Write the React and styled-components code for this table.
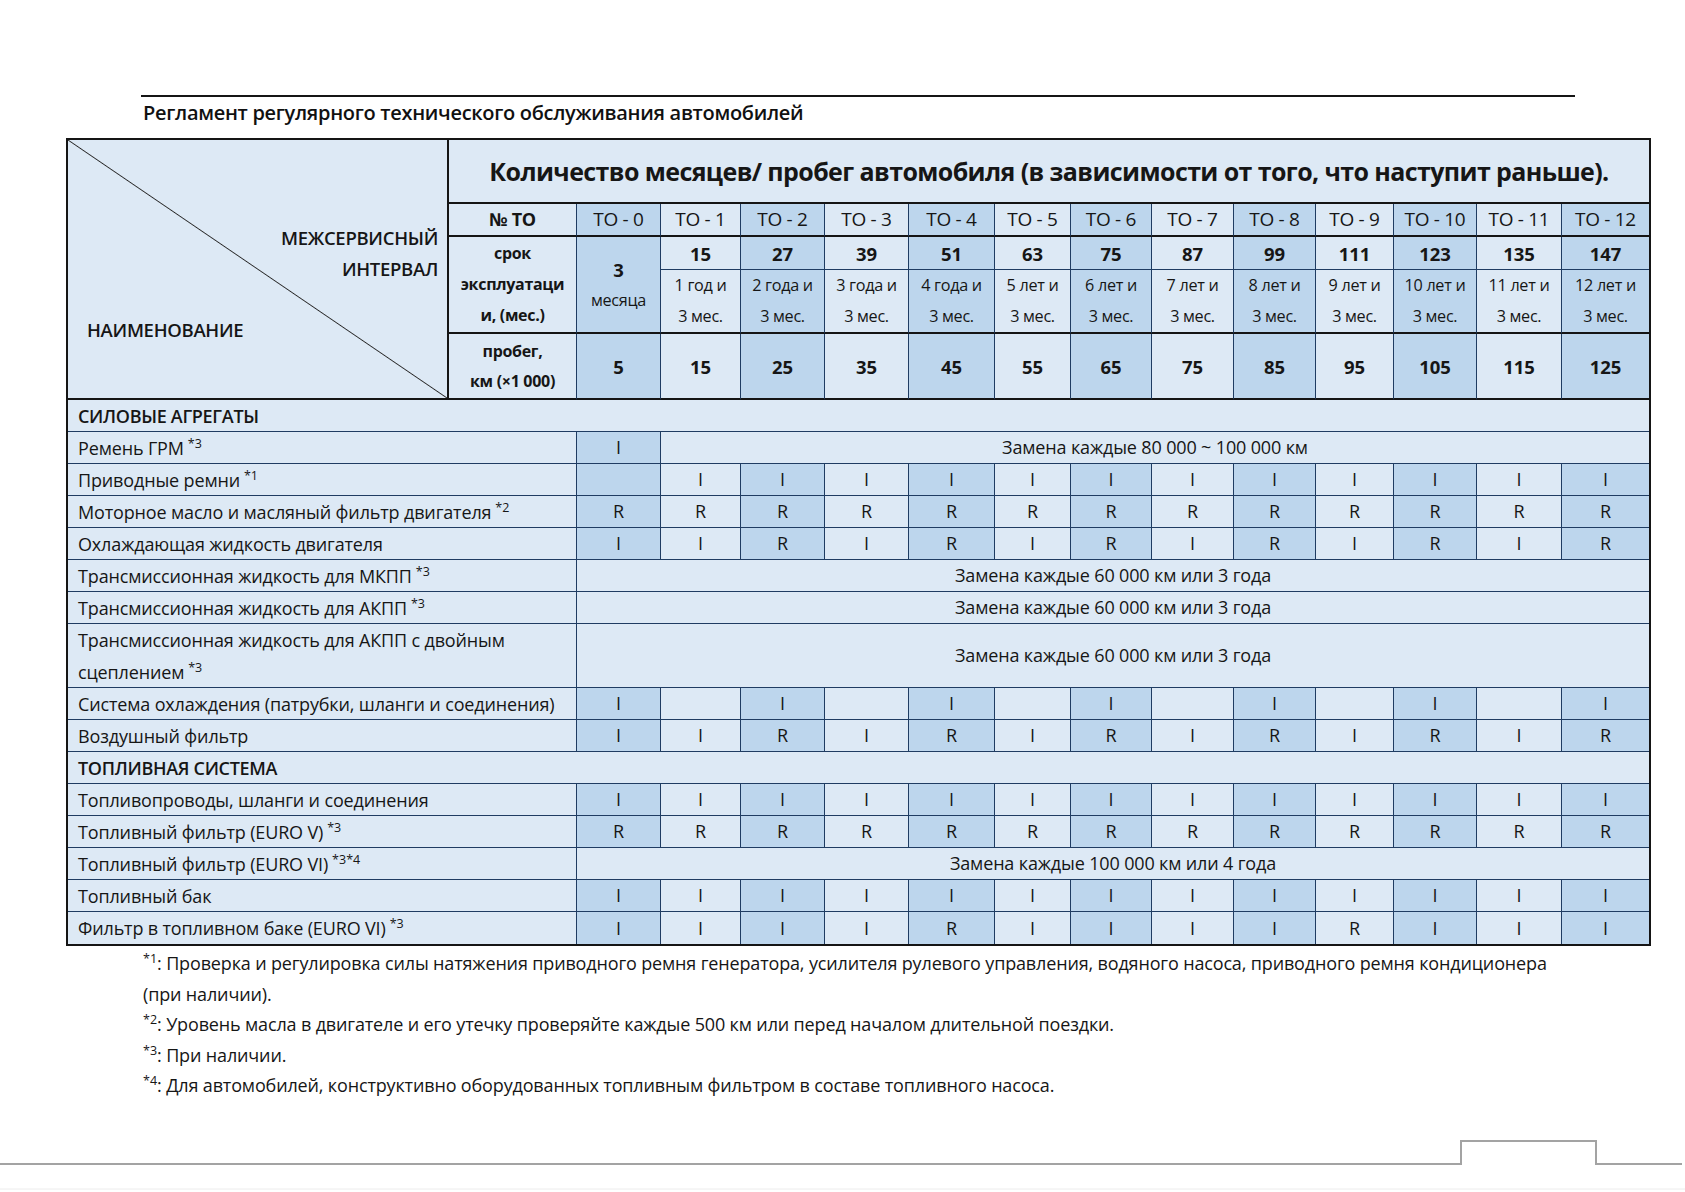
import React from 'react';
import styled, { createGlobalStyle } from 'styled-components';

const INK = '#151515';
const NAVY = '#1f3c62';
const LIGHT = '#dde9f5';
const DARK = '#bdd6ed';

const GlobalStyle = createGlobalStyle`
  html, body { margin: 0; padding: 0; background: #ffffff; }
  body { font-family: "Open Sans", "Noto Sans", sans-serif; color: #161616; }
`;

const Page = styled.div`
  position: relative;
  width: 1685px;
  height: 1192px;
  box-sizing: border-box;
  padding-top: 95px;
  display: flex;
  flex-direction: column;
  overflow: hidden;
`;

const Rule = styled.div`
  margin-left: 141px;
  width: 1434px;
  height: 2px;
  background: ${INK};
`;

const DocTitle = styled.h1`
  margin: 4px 0 0 143px;
  font-size: 20px;
  font-weight: 600;
  line-height: 24px;
  letter-spacing: -0.3px;
  color: #111;
`;

const Table = styled.div`
  margin: 13px 0 0 66px;
  width: 1585px;
  box-sizing: border-box;
  border: 2px solid ${INK};
  display: grid;
  grid-template-columns: 381px 128px 84px 80px 84px 84px 86px 76px 81px 82px 82px 78px 83px 85px 87px;
  grid-template-rows: 64px 33px 33px 64px 66px repeat(7, 32px) 64px repeat(8, 32px);
  background: ${LIGHT};
`;

const edge = (v) =>
  v === 'thick' ? `2px solid ${INK}` : v === 'none' ? 'none' : `1px solid ${NAVY}`;

const Cell = styled.div`
  box-sizing: border-box;
  min-width: 0;
  display: flex;
  flex-direction: column;
  align-items: center;
  justify-content: center;
  text-align: center;
  background: ${(p) => (p.$dark ? DARK : LIGHT)};
  border-right: ${(p) => edge(p.$r)};
  border-bottom: ${(p) => edge(p.$b)};
  grid-column: ${(p) => p.$col || 'auto'};
  grid-row: ${(p) => p.$row || 'auto'};
  font-size: 18px;
  letter-spacing: -0.15px;
  line-height: 31px;
  white-space: nowrap;
`;

const ToCell = styled(Cell)`
  font-size: 19px;
  letter-spacing: -0.3px;
`;

const DiagCell = styled(Cell)`
  align-items: stretch;
  justify-content: flex-start;
  background: linear-gradient(
    to top right,
    ${LIGHT} calc(50% - 0.9px),
    #2a2a2a 50%,
    ${LIGHT} calc(50% + 0.9px)
  );
`;

const CornerTop = styled.div`
  margin-top: 82px;
  padding-right: 9px;
  text-align: right;
  font-weight: 600;
  font-size: 18.5px;
  letter-spacing: -0.3px;
  line-height: 31px;
`;

const CornerBottom = styled.div`
  margin-top: 30px;
  padding-left: 19px;
  text-align: left;
  font-weight: 600;
  font-size: 18.5px;
  letter-spacing: -0.3px;
  line-height: 31px;
`;

const HeadTitle = styled.div`
  font-size: 25px;
  font-weight: 700;
  letter-spacing: -0.6px;
  line-height: 32px;
`;

const HeadLabel = styled.div`
  font-size: ${(p) => p.$size || 16}px;
  font-weight: 700;
  line-height: ${(p) => p.$lh || 31}px;
  letter-spacing: -0.3px;
`;

const Num = styled.div`
  font-size: 18.5px;
  font-weight: 700;
  line-height: 31px;
`;

const Small = styled.div`
  font-size: 16.2px;
  letter-spacing: -0.3px;
  line-height: 31px;
`;

const LabelCell = styled(Cell)`
  align-items: flex-start;
  text-align: left;
  padding-left: 10px;
  line-height: 32px;
`;

const SectionCell = styled(LabelCell)`
  font-weight: 600;
  letter-spacing: -0.3px;
`;

const Sup = styled.sup`
  font-size: 12.5px;
  line-height: 0;
  vertical-align: 0;
  position: relative;
  top: -7px;
  margin-left: 4px;
  letter-spacing: 0;
`;

const Notes = styled.div`
  margin: 2px 0 0 143px;
  font-size: 18px;
  line-height: 30.5px;
  letter-spacing: -0.15px;
`;

const NoteStar = styled.sup`
  font-size: 12.5px;
  line-height: 0;
  vertical-align: 0;
  position: relative;
  top: -7px;
  letter-spacing: 0;
`;

const FooterArt = styled.svg`
  margin-top: auto;
  display: block;
  flex: none;
`;

const TO = Array.from({ length: 13 }, (_, i) => `ТО - ${i}`);
const MONTHS = [15, 27, 39, 51, 63, 75, 87, 99, 111, 123, 135, 147];
const YEARS = ['1 год и', '2 года и', '3 года и', '4 года и', '5 лет и', '6 лет и', '7 лет и', '8 лет и', '9 лет и', '10 лет и', '11 лет и', '12 лет и'];
const KM = [5, 15, 25, 35, 45, 55, 65, 75, 85, 95, 105, 115, 125];

const ALL = (v) => Array(13).fill(v);
const ALT = (first) => [first, 'I', 'R', 'I', 'R', 'I', 'R', 'I', 'R', 'I', 'R', 'I', 'R'];

const ROWS = [
  { section: 'СИЛОВЫЕ АГРЕГАТЫ' },
  { label: 'Ремень ГРМ', sup: '*3', first: 'I', span: 'Замена каждые 80 000 ~ 100 000 км' },
  { label: 'Приводные ремни', sup: '*1', cells: ['', ...Array(12).fill('I')] },
  { label: 'Моторное масло и масляный фильтр двигателя', sup: '*2', cells: ALL('R') },
  { label: 'Охлаждающая жидкость двигателя', cells: ALT('I') },
  { label: 'Трансмиссионная жидкость для МКПП', sup: '*3', spanAll: 'Замена каждые 60 000 км или 3 года' },
  { label: 'Трансмиссионная жидкость для АКПП', sup: '*3', spanAll: 'Замена каждые 60 000 км или 3 года' },
  { label: ['Трансмиссионная жидкость для АКПП с двойным', 'сцеплением'], sup: '*3', spanAll: 'Замена каждые 60 000 км или 3 года', tall: true },
  { label: 'Система охлаждения (патрубки, шланги и соединения)', cells: ['I', '', 'I', '', 'I', '', 'I', '', 'I', '', 'I', '', 'I'] },
  { label: 'Воздушный фильтр', cells: ALT('I') },
  { section: 'ТОПЛИВНАЯ СИСТЕМА' },
  { label: 'Топливопроводы, шланги и соединения', cells: ALL('I') },
  { label: 'Топливный фильтр (EURO V)', sup: '*3', cells: ALL('R') },
  { label: 'Топливный фильтр (EURO VI)', sup: '*3*4', spanAll: 'Замена каждые 100 000 км или 4 года' },
  { label: 'Топливный бак', cells: ALL('I') },
  { label: 'Фильтр в топливном баке (EURO VI)', sup: '*3', cells: ['I', 'I', 'I', 'I', 'R', 'I', 'I', 'I', 'I', 'R', 'I', 'I', 'I'] },
];

function Label({ row }) {
  const sup = row.sup ? <Sup>{row.sup}</Sup> : null;
  if (Array.isArray(row.label)) {
    return (
      <>
        <div>{row.label[0]}</div>
        <div>{row.label[1]}{sup}</div>
      </>
    );
  }
  return <div>{row.label}{sup}</div>;
}

function Header() {
  const cells = [];
  cells.push(
    <DiagCell key="diag" $col="1" $row="1 / 6" $r="thick" $b="thick">
      <CornerTop>МЕЖСЕРВИСНЫЙ<br />ИНТЕРВАЛ</CornerTop>
      <CornerBottom>НАИМЕНОВАНИЕ</CornerBottom>
    </DiagCell>
  );
  cells.push(
    <Cell key="title" $col="2 / 16" $row="1" $r="none" $b="thick">
      <HeadTitle>Количество месяцев/ пробег автомобиля (в зависимости от того, что наступит раньше).</HeadTitle>
    </Cell>
  );
  cells.push(
    <Cell key="no" $col="2" $row="2" $b="thick">
      <HeadLabel $size={18}>№ ТО</HeadLabel>
    </Cell>
  );
  TO.forEach((t, i) => {
    cells.push(
      <ToCell key={`to${i}`} $col={`${i + 3}`} $row="2" $dark={i % 2 === 0} $b="thick" $r={i === 12 ? 'none' : 'thin'}>
        {t}
      </ToCell>
    );
  });
  cells.push(
    <Cell key="srok" $col="2" $row="3 / 5" $b="thick">
      <HeadLabel>срок</HeadLabel>
      <HeadLabel>эксплуатаци</HeadLabel>
      <HeadLabel>и, (мес.)</HeadLabel>
    </Cell>
  );
  cells.push(
    <Cell key="m0" $col="3" $row="3 / 5" $dark $b="thick">
      <Num>3</Num>
      <Small>месяца</Small>
    </Cell>
  );
  MONTHS.forEach((m, i) => {
    const idx = i + 1;
    cells.push(
      <Cell key={`m${idx}`} $col={`${idx + 3}`} $row="3" $dark={idx % 2 === 0} $r={idx === 12 ? 'none' : 'thin'}>
        <Num>{m}</Num>
      </Cell>
    );
    cells.push(
      <Cell key={`y${idx}`} $col={`${idx + 3}`} $row="4" $dark={idx % 2 === 0} $b="thick" $r={idx === 12 ? 'none' : 'thin'}>
        <Small>{YEARS[i]}</Small>
        <Small>3 мес.</Small>
      </Cell>
    );
  });
  cells.push(
    <Cell key="km" $col="2" $row="5" $b="thick">
      <HeadLabel $lh={30}>пробег,</HeadLabel>
      <HeadLabel $lh={30}>км (×1 000)</HeadLabel>
    </Cell>
  );
  KM.forEach((k, i) => {
    cells.push(
      <Cell key={`k${i}`} $col={`${i + 3}`} $row="5" $dark={i % 2 === 0} $b="thick" $r={i === 12 ? 'none' : 'thin'}>
        <Num>{k}</Num>
      </Cell>
    );
  });
  return cells;
}

function Body() {
  const out = [];
  let line = 6;
  ROWS.forEach((row, ri) => {
    const r = `${line}`;
    const last = ri === ROWS.length - 1;
    const b = last ? 'none' : 'thin';
    line += 1;
    if (row.section) {
      out.push(
        <SectionCell key={`s${ri}`} $col="1 / -1" $row={r} $r="none" $b={b}>
          {row.section}
        </SectionCell>
      );
      return;
    }
    out.push(
      <LabelCell key={`l${ri}`} $col="1 / 3" $row={r} $b={b}>
        <Label row={row} />
      </LabelCell>
    );
    if (row.spanAll) {
      out.push(
        <Cell key={`sp${ri}`} $col="3 / 16" $row={r} $r="none" $b={b}>
          {row.spanAll}
        </Cell>
      );
      return;
    }
    if (row.span) {
      out.push(
        <Cell key={`f${ri}`} $col="3" $row={r} $dark $b={b}>
          {row.first}
        </Cell>
      );
      out.push(
        <Cell key={`sp${ri}`} $col="4 / 16" $row={r} $r="none" $b={b}>
          {row.span}
        </Cell>
      );
      return;
    }
    row.cells.forEach((v, ci) => {
      out.push(
        <Cell key={`c${ri}-${ci}`} $col={`${ci + 3}`} $row={r} $dark={ci % 2 === 0} $b={b} $r={ci === 12 ? 'none' : 'thin'}>
          {v}
        </Cell>
      );
    });
  });
  return out;
}

const NOTES = [
  ['1', 'Проверка и регулировка силы натяжения приводного ремня генератора, усилителя рулевого управления, водяного насоса, приводного ремня кондиционера', '(при наличии).'],
  ['2', 'Уровень масла в двигателе и его утечку проверяйте каждые 500 км или перед началом длительной поездки.'],
  ['3', 'При наличии.'],
  ['4', 'Для автомобилей, конструктивно оборудованных топливным фильтром в составе топливного насоса.'],
];

export default function App() {
  return (
    <>
      <GlobalStyle />
      <Page>
        <Rule />
        <DocTitle>Регламент регулярного технического обслуживания автомобилей</DocTitle>
        <Table>
          <Header />
          <Body />
        </Table>
        <Notes>
          {NOTES.map(([n, text, extra]) => (
            <React.Fragment key={n}>
              <div>
                <NoteStar>*{n}</NoteStar>: {text}
              </div>
              {extra && <div>{extra}</div>}
            </React.Fragment>
          ))}
        </Notes>
        <FooterArt width="1685" height="62" viewBox="0 0 1685 62">
          <path d="M0 34 H1461 V11 H1596 V34 H1682" fill="none" stroke="#a3a3a3" strokeWidth="2" />
          <path d="M0 59 H1685" fill="none" stroke="#ececec" strokeWidth="1" />
        </FooterArt>
      </Page>
    </>
  );
}
